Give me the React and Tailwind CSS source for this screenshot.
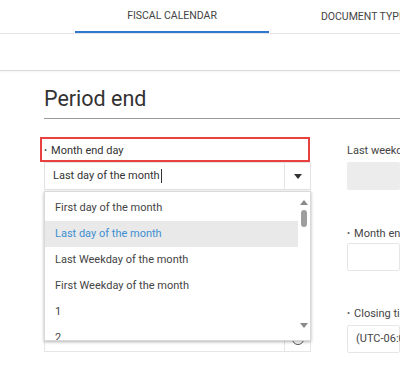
import React from "react";

function Arrow({ dir = "down", color = "#333" }) {
  return dir === "down" ? (
    <span className="block w-0 h-0 border-l-[4px] border-r-[4px] border-t-[5px] border-l-transparent border-r-transparent" style={{ borderTopColor: color }} />
  ) : (
    <span className="block w-0 h-0 border-l-[4px] border-r-[4px] border-b-[5px] border-l-transparent border-r-transparent" style={{ borderBottomColor: color }} />
  );
}

export default function App() {
  const items = [
    "First day of the month",
    "Last day of the month",
    "Last Weekday of the month",
    "First Weekday of the month",
    "1",
    "2",
  ];
  return (
    <div className="w-[400px] h-[374px] overflow-hidden bg-white text-[#333] font-['Roboto',sans-serif]">
      {/* tab bar */}
      <div className="flex h-[34px] border-b border-[#e6e6e6] whitespace-nowrap">
        <div className="ml-[75px] w-[194px] h-[33px] shrink-0 flex items-center justify-center border-b-2 border-[#2f78cc] text-[10.5px] text-[#444]">
          FISCAL CALENDAR
        </div>
        <div className="w-[194px] h-[33px] shrink-0 flex items-center justify-center text-[10.5px] text-[#444]">
          DOCUMENT TYPES
        </div>
      </div>
      {/* band */}
      <div className="h-[37px] border-b border-[#dcdcdc] shadow-[0_1px_2px_rgba(0,0,0,0.06)]" />

      <div className="pl-[44px]">
        <div className="mt-[15px] pb-[6px] border-b border-[#9a9a9a] text-[21.5px] leading-[26px] text-[#333]">
          Period end
        </div>

        <div className="flex gap-[36px] whitespace-nowrap">
          {/* left column */}
          <div className="relative w-[267px] shrink-0">
            <div className="mt-[18px] -ml-[4px] w-[270px] h-[25px] border-2 border-[#e8413f] flex items-center pl-[2px] pt-[3px] text-[11px] text-[#333]">
              <span className="text-[9px] mr-[4px] text-[#555]">•</span>Month end day
            </div>
            <div className="h-[28px] border border-[#e3e3e3] flex">
              <div className="flex-1 flex items-center pl-[8px] text-[11px] text-[#333]">
                Last day of the month
                <span className="ml-[1px] w-px h-[14px] bg-[#333]" />
              </div>
              <div className="w-[26px] border-l border-[#e6e6e6] flex items-center justify-center">
                <Arrow />
              </div>
            </div>

            <div className="mt-[35px] h-[18px] flex items-center text-[11px] text-[#444]">
              <span className="text-[9px] mr-[4px] text-[#555]">•</span>Month end time
            </div>
            <div className="h-[28px] border border-[#e3e3e3]" />

            <div className="mt-[35px] h-[18px] flex items-center text-[11px] text-[#444]">
              <span className="text-[9px] mr-[4px] text-[#555]">•</span>Closing time
            </div>
            <div className="mt-[1px] h-[27px] border border-[#e6e6e6] flex">
              <div className="flex-1 flex items-center pl-[8px] text-[11px] text-[#444]">23:59</div>
              <div className="w-[26px] border-l border-[#e6e6e6] flex items-center justify-center">
                <span className="block w-[12px] h-[12px] rounded-full border border-[#555]" />
              </div>
            </div>

            {/* dropdown overlay */}
            <div className="absolute left-0 top-[72px] w-[267px] h-[150px] bg-white border border-[#d9d9d9] shadow-[0_1px_3px_rgba(0,0,0,0.3)] flex overflow-hidden">
              <div className="flex-1 pt-[3px]">
                {items.map((t, i) => (
                  <div
                    key={t}
                    className={
                      "h-[26px] flex items-center pl-[10px] text-[11px] " +
                      (i === 1 ? "bg-[#e9e9e9] text-[#3d8fd1]" : "text-[#444]")
                    }
                  >
                    {t}
                  </div>
                ))}
              </div>
              <div className="w-[12px] flex flex-col items-center pt-[8px]">
                <Arrow dir="up" color="#8a8a8a" />
                <span className="mt-[5px] w-[6px] h-[17px] rounded-full bg-[#9e9e9e]" />
                <span className="flex-1" />
                <span className="mb-[12px]">
                  <Arrow color="#8a8a8a" />
                </span>
              </div>
            </div>
          </div>

          {/* right column */}
          <div className="flex-1 min-w-0">
            <div className="mt-[23px] h-[18px] flex items-center text-[11px] text-[#444]">
              Last weekday of the month
            </div>
            <div className="mt-[2px] h-[28px] rounded-[2px] bg-[#ececec]" />

            <div className="mt-[35px] h-[18px] flex items-center text-[11px] text-[#444]">
              <span className="text-[9px] mr-[4px] text-[#555]">•</span>Month end time
            </div>
            <div className="h-[28px] border border-[#e6e6e6] rounded-[2px]" />

            <div className="mt-[34px] h-[18px] flex items-center text-[11px] text-[#444]">
              <span className="text-[9px] mr-[4px] text-[#555]">•</span>Closing time zone
            </div>
            <div className="mt-[2px] h-[28px] border border-[#e6e6e6] rounded-[2px] flex items-center pl-[8px] text-[11px] text-[#444]">
              (UTC-06:00) Central Time (US &amp; Canada)
            </div>
          </div>
        </div>
      </div>
    </div>
  );
}
